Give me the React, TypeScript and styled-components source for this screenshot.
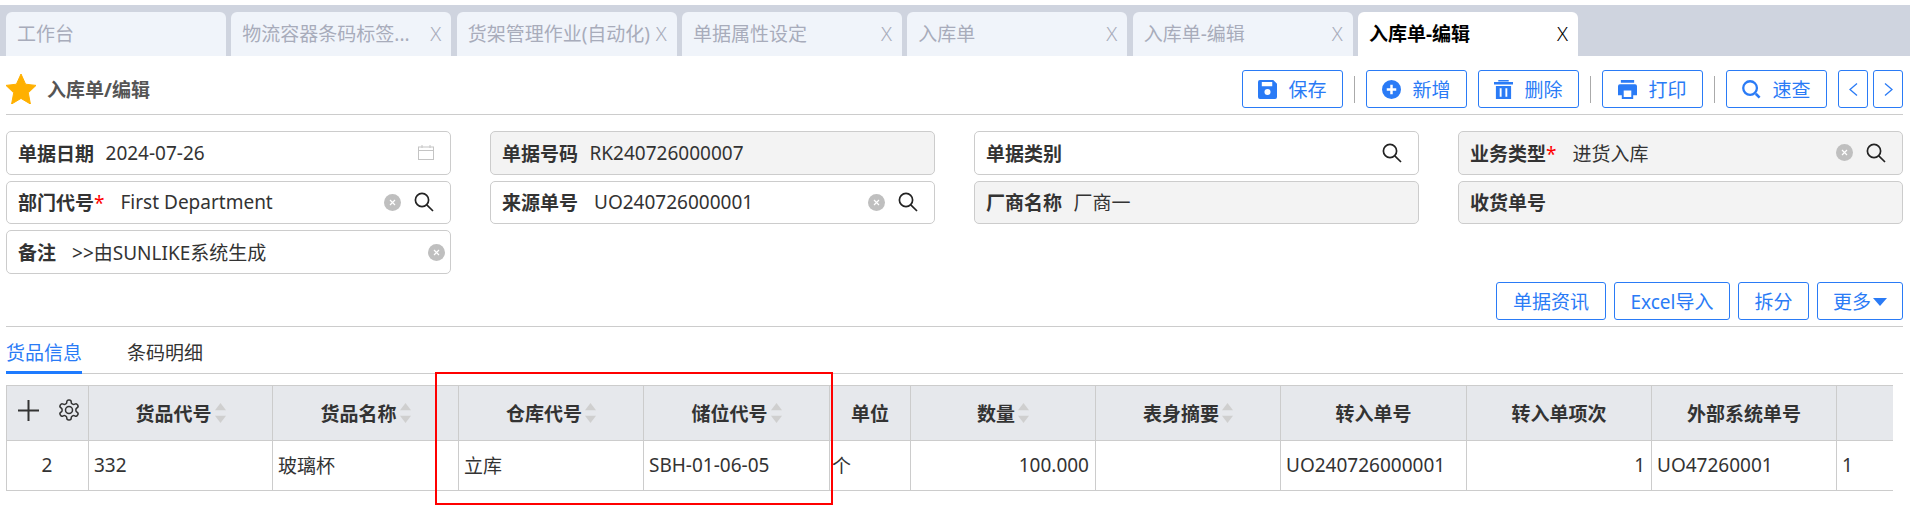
import React, { FunctionComponent, ReactNode } from 'react'
import styled, { createGlobalStyle } from 'styled-components'

const BLUE = '#2a7bf6'
const LINE = '#cccccc'

const tabs = [
  { label: '工作台', closable: false },
  { label: '物流容器条码标签...', closable: true },
  { label: '货架管理作业(自动化)', closable: true },
  { label: '单据属性设定', closable: true },
  { label: '入库单', closable: true },
  { label: '入库单-编辑', closable: true },
  { label: '入库单-编辑', closable: true, active: true },
]

const columns = [
  { title: '货品代号', width: 184, sort: true },
  { title: '货品名称', width: 186, sort: true },
  { title: '仓库代号', width: 185, sort: true },
  { title: '储位代号', width: 186, sort: true },
  { title: '单位', width: 81 },
  { title: '数量', width: 185, sort: true },
  { title: '表身摘要', width: 185, sort: true },
  { title: '转入单号', width: 186 },
  { title: '转入单项次', width: 185 },
  { title: '外部系统单号', width: 185 },
  { title: '', width: 56 },
]

const cells: { text: string; right?: boolean; narrow?: boolean }[] = [
  { text: '332' },
  { text: '玻璃杯' },
  { text: '立库' },
  { text: 'SBH-01-06-05' },
  { text: '个', narrow: true },
  { text: '100.000', right: true },
  { text: '' },
  { text: 'UO240726000001' },
  { text: '1', right: true },
  { text: 'UO47260001' },
  { text: '1' },
]

const ClearIcon = () => (
  <ClearSvg viewBox="0 0 17 17">
    <circle cx="8.5" cy="8.5" r="8.5" fill="#bfbfbf" />
    <path d="M6 6l5 5M11 6l-5 5" stroke="#fff" strokeWidth="1.2" />
  </ClearSvg>
)

const SearchIcon = () => (
  <SearchSvg viewBox="0 0 20 20" fill="none" stroke="#222" strokeWidth="1.7">
    <circle cx="8" cy="8" r="6.6" />
    <path d="M12.8 12.8L19 19" />
  </SearchSvg>
)

const CalendarIcon = () => (
  <CalendarSvg viewBox="0 0 16 15" fill="none" stroke="#c4c4c4" strokeWidth="1">
    <rect x="0.5" y="2" width="15" height="12.5" />
    <path d="M0.5 5.5h15M4 0v3M12 0v3" />
  </CalendarSvg>
)

const SortIcon = () => (
  <SortSvg viewBox="0 0 12 22">
    <path d="M6 0l6 8H0z" fill="#cfcfcf" />
    <path d="M6 22l6-8H0z" fill="#cfcfcf" />
  </SortSvg>
)

const ButtonIcon: FunctionComponent<{ children: ReactNode }> = ({ children }) => (
  <IconSvg viewBox="0 0 20 20">{children}</IconSvg>
)

const Field: FunctionComponent<{
  label: string
  value?: string
  required?: boolean
  disabled?: boolean
  lookup?: boolean
  clear?: boolean
  inset?: boolean
  date?: boolean
}> = ({ label, value, required, disabled, lookup, clear, inset, date }) => (
  <FieldBox $disabled={disabled} $tight={clear && !lookup}>
    <FieldLabel>
      {label}
      {required && <Required>*</Required>}
    </FieldLabel>
    <FieldValue $inset={inset}>{value}</FieldValue>
    {date && <CalendarIcon />}
    {clear && <ClearIcon />}
    {lookup && <SearchIcon />}
  </FieldBox>
)

export default function App() {
  return (
    <>
      <GlobalStyle />
      <Page>
        <TabBar>
          {tabs.map((tab, i) => (
            <Tab key={i} $active={tab.active}>
              <span>{tab.label}</span>
              {tab.closable && <TabClose>X</TabClose>}
            </Tab>
          ))}
        </TabBar>
        <Content>
          <Header>
            <Star viewBox="0 0 30 30">
              <path
                d="M15 0l4.6 10.2 10.4 1.2-7.7 7.4 2.1 11.2-9.4-5.6-9.4 5.6 2.1-11.2L0 11.4l10.4-1.2z"
                fill="#ffb000"
                stroke="#ffb000"
                strokeWidth="1"
                strokeLinejoin="round"
              />
            </Star>
            <Title>入库单/编辑</Title>
            <Toolbar>
              <ActionButton>
                <ButtonIcon>
                  <path
                    fillRule="evenodd"
                    d="M2 0h14l4 4v14a2 2 0 0 1-2 2H2a2 2 0 0 1-2-2V2a2 2 0 0 1 2-2zM4 2v4.500h11V2zm6 7.500a3.200 3.200 0 1 0 0 6.400 3.200 3.200 0 0 0 0-6.400z"
                    fill={BLUE}
                  />
                </ButtonIcon>
                保存
              </ActionButton>
              <Divider />
              <ActionButton>
                <ButtonIcon>
                  <path
                    fillRule="evenodd"
                    d="M10 0a10 10 0 1 1 0 20 10 10 0 0 1 0-20zM8.700 5v3.700H5v2.600h3.700V15h2.600v-3.700H15V8.700h-3.700V5z"
                    fill={BLUE}
                  />
                </ButtonIcon>
                新增
              </ActionButton>
              <ActionButton>
                <ButtonIcon>
                  <path
                    fillRule="evenodd"
                    d="M4.500 0h11v1.500h-11zM0 2.200h20v2.500H0zM2 6.200h16V20H2zM6 8.700v8.800h2V8.700zm6 0v8.800h2V8.700z"
                    fill={BLUE}
                  />
                </ButtonIcon>
                删除
              </ActionButton>
              <Divider />
              <ActionButton>
                <ButtonIcon>
                  <path
                    fillRule="evenodd"
                    d="M3 0h14v3H3zM2 4.500h16a2 2 0 0 1 2 2V16h-4v4H4v-4H0V6.500a2 2 0 0 1 2-2zM6 11v7h8v-7z"
                    fill={BLUE}
                  />
                </ButtonIcon>
                打印
              </ActionButton>
              <Divider />
              <ActionButton>
                <ButtonIcon>
                  <circle cx="8.500" cy="8.500" r="7.200" fill="none" stroke={BLUE} strokeWidth="2.400" />
                  <path d="M14.500 14.500l4 4" stroke={BLUE} strokeWidth="2.800" />
                </ButtonIcon>
                速查
              </ActionButton>
              <ArrowButton>
                <svg width="9" height="13" viewBox="0 0 9 13" fill="none" stroke={BLUE} strokeWidth="1.300">
                  <path d="M8 .5l-7 6 7 6" />
                </svg>
              </ArrowButton>
              <ArrowButton>
                <svg width="9" height="13" viewBox="0 0 9 13" fill="none" stroke={BLUE} strokeWidth="1.300">
                  <path d="M1 .5l7 6-7 6" />
                </svg>
              </ArrowButton>
            </Toolbar>
          </Header>

          <FormGrid>
            <Field label="单据日期" value="2024-07-26" date />
            <Field label="单据号码" value="RK240726000007" disabled />
            <Field label="单据类别" lookup />
            <Field label="业务类型" required value="进货入库" disabled clear lookup inset />
            <Field label="部门代号" required value="First Department" clear lookup inset />
            <Field label="来源单号" value="UO240726000001" clear lookup inset />
            <Field label="厂商名称" value="厂商一" disabled />
            <Field label="收货单号" disabled />
            <Field label="备注" value=">>由SUNLIKE系统生成" clear inset />
          </FormGrid>

          <SecondaryBar>
            <PlainButton $width={110}>单据资讯</PlainButton>
            <PlainButton $width={116}>Excel导入</PlainButton>
            <PlainButton $width={71}>拆分</PlainButton>
            <PlainButton $width={86}>
              更多
              <Caret />
            </PlainButton>
          </SecondaryBar>

          <SubTabs>
            <SubTab $active>货品信息</SubTab>
            <SubTab>条码明细</SubTab>
          </SubTabs>

          <TableWrap>
            <Grid>
              <colgroup>
                <ColWidth $width={82} />
                {columns.map((c, i) => (
                  <ColWidth key={i} $width={c.width} />
                ))}
              </colgroup>
              <thead>
                <tr>
                  <HeadCell>
                    <HeadTools>
                      <svg width="21" height="21" viewBox="0 0 21 21" stroke="#333" strokeWidth="2">
                        <path d="M10.500 0v21M0 10.500h21" />
                      </svg>
                      <svg width="24" height="24" viewBox="0 0 24 24" fill="none" stroke="#333" strokeWidth="1.500" strokeLinejoin="round">
                        <path d="M12.220 2h-.44a2 2 0 0 0-2 2v.18a2 2 0 0 1-1 1.730l-.43.250a2 2 0 0 1-2 0l-.150-.080a2 2 0 0 0-2.730.730l-.220.380a2 2 0 0 0 .730 2.730l.150.100a2 2 0 0 1 1 1.720v.510a2 2 0 0 1-1 1.740l-.150.090a2 2 0 0 0-.730 2.730l.220.380a2 2 0 0 0 2.730.730l.150-.080a2 2 0 0 1 2 0l.430.250a2 2 0 0 1 1 1.730V20a2 2 0 0 0 2 2h.440a2 2 0 0 0 2-2v-.18a2 2 0 0 1 1-1.730l.430-.250a2 2 0 0 1 2 0l.150.080a2 2 0 0 0 2.730-.730l.220-.390a2 2 0 0 0-.730-2.730l-.150-.080a2 2 0 0 1-1-1.740v-.500a2 2 0 0 1 1-1.740l.150-.090a2 2 0 0 0 .730-2.730l-.220-.380a2 2 0 0 0-2.730-.730l-.150.080a2 2 0 0 1-2 0l-.430-.250a2 2 0 0 1-1-1.730V4a2 2 0 0 0-2-2z" />
                        <circle cx="12" cy="12" r="3.500" />
                      </svg>
                    </HeadTools>
                  </HeadCell>
                  {columns.map((c, i) => (
                    <HeadCell key={i}>
                      <HeadInner>
                        {c.title}
                        {c.sort && <SortIcon />}
                      </HeadInner>
                    </HeadCell>
                  ))}
                </tr>
              </thead>
              <tbody>
                <tr>
                  <BodyCell $center>2</BodyCell>
                  {cells.map((c, i) => (
                    <BodyCell key={i} $right={c.right} $narrow={c.narrow}>
                      {c.text}
                    </BodyCell>
                  ))}
                </tr>
              </tbody>
            </Grid>
            <Highlight />
          </TableWrap>
        </Content>
      </Page>
    </>
  )
}

const GlobalStyle = createGlobalStyle`
  html, body {
    margin: 0;
    padding: 0;
    background: #fff;
  }

  body {
    font-family: 'Noto Sans', 'Noto Sans CJK SC', sans-serif;
    font-size: 19px;
    color: #333;
    overflow: hidden;
  }
`

const Page = styled.div`
  width: 1910px;
  height: 524px;
  padding-top: 5px;
  box-sizing: border-box;
`

const TabBar = styled.div`
  display: flex;
  gap: 5.33px;
  height: 51px;
  padding: 7px 0 0 6px;
  box-sizing: border-box;
  background: #cfd4df;
`

const Tab = styled.div<{ $active?: boolean }>`
  display: flex;
  align-items: center;
  justify-content: space-between;
  width: 220px;
  padding: 0 10px 2px 11px;
  box-sizing: border-box;
  border-radius: 6px 6px 0 0;
  background: ${({ $active }) => ($active ? '#fff' : '#f0f4fa')};
  color: ${({ $active }) => ($active ? '#000' : '#a8acbb')};
  font-weight: ${({ $active }) => ($active ? 700 : 400)};
  white-space: nowrap;
`

const TabClose = styled.span`
  font-size: 20px;
  font-weight: 300;
`

const Content = styled.div`
  padding: 0 7px 0 6px;
`

const Header = styled.div`
  display: flex;
  align-items: center;
  padding: 14px 0 6px;
  border-bottom: 1px solid ${LINE};
`

const Star = styled.svg`
  width: 30px;
  height: 30px;
  flex: none;
`

const Title = styled.h1`
  margin: 0 0 0 11px;
  font-size: 19px;
  font-weight: 700;
  color: #555;
`

const Toolbar = styled.div`
  display: flex;
  align-items: center;
  gap: 11px;
  margin-left: auto;
`

const ActionButton = styled.button`
  display: flex;
  align-items: center;
  justify-content: center;
  gap: 11px;
  width: 101px;
  height: 38px;
  padding: 0;
  border: 1px solid ${BLUE};
  border-radius: 3px;
  background: #fff;
  color: ${BLUE};
  font: inherit;
`

const ArrowButton = styled(ActionButton)`
  width: 30px;
  margin-right: -6px;

  &:last-child {
    margin-right: 0;
  }
`

const IconSvg = styled.svg`
  width: 19px;
  height: 19px;
  flex: none;
`

const Divider = styled.span`
  width: 1px;
  height: 27px;
  background: #aaa;
`

const FormGrid = styled.div`
  display: grid;
  grid-template-columns: repeat(4, 1fr);
  grid-auto-rows: 43.5px;
  column-gap: 39px;
  row-gap: 6.2px;
  margin-top: 16px;
`

const FieldBox = styled.div<{ $disabled?: boolean; $tight?: boolean }>`
  display: flex;
  align-items: center;
  padding: 0 ${({ $tight }) => ($tight ? '5px' : '16px')} 0 11px;
  border: 1px solid ${LINE};
  border-radius: 5px;
  background: ${({ $disabled }) => ($disabled ? '#f3f3f3' : '#fff')};
`

const FieldLabel = styled.span`
  flex: none;
  font-weight: 700;
  color: #333;
`

const Required = styled.span`
  color: #f00;
  font-weight: 400;
`

const FieldValue = styled.span<{ $inset?: boolean }>`
  flex: 1;
  margin-left: ${({ $inset }) => ($inset ? '16px' : '11.5px')};
  color: #333;
  white-space: nowrap;
`

const ClearSvg = styled.svg`
  flex: none;
  width: 17px;
  height: 17px;
`

const SearchSvg = styled.svg`
  flex: none;
  width: 20px;
  height: 20px;
  margin-left: 13px;
`

const CalendarSvg = styled.svg`
  flex: none;
  width: 16px;
  height: 15px;
`

const SecondaryBar = styled.div`
  display: flex;
  justify-content: flex-end;
  gap: 8px;
  margin-top: 8.1px;
  padding-bottom: 6px;
  border-bottom: 1px solid ${LINE};
`

const PlainButton = styled.button<{ $width: number }>`
  display: flex;
  align-items: center;
  justify-content: center;
  gap: 2px;
  width: ${({ $width }) => $width}px;
  height: 38px;
  padding: 0;
  border: 1px solid ${BLUE};
  border-radius: 3px;
  background: #fff;
  color: ${BLUE};
  font: inherit;
`

const Caret = styled.span`
  width: 0;
  height: 0;
  margin-top: 3px;
  border-left: 7px solid transparent;
  border-right: 7px solid transparent;
  border-top: 8px solid ${BLUE};
`

const SubTabs = styled.div`
  display: flex;
  gap: 45px;
  height: 46px;
  border-bottom: 1px solid ${LINE};
`

const SubTab = styled.div<{ $active?: boolean }>`
  height: 47px;
  line-height: 52px;
  box-sizing: border-box;
  color: ${({ $active }) => ($active ? BLUE : '#333')};
  border-bottom: 3px solid ${({ $active }) => ($active ? '#1e7bff' : 'transparent')};
`

const TableWrap = styled.div`
  position: relative;
  margin-top: 11px;
`

const Grid = styled.table`
  width: 1886px;
  table-layout: fixed;
  border-collapse: collapse;
`

const ColWidth = styled.col<{ $width: number }>`
  width: ${({ $width }) => $width}px;
`

const HeadCell = styled.th`
  height: 54px;
  padding: 0;
  border: 1px solid ${LINE};
  background: #e6e8ec;
  font-weight: 700;
  color: #333;
  white-space: nowrap;

  &:last-child {
    border-right: none;
  }
`

const HeadInner = styled.div`
  display: flex;
  align-items: center;
  justify-content: center;
`

const HeadTools = styled.div`
  display: flex;
  align-items: center;
  justify-content: space-between;
  padding: 0 7px 5px 11px;
`

const SortSvg = styled.svg`
  width: 11px;
  height: 22px;
  margin-left: 3px;
  flex: none;
`

const BodyCell = styled.td<{ $center?: boolean; $right?: boolean; $narrow?: boolean }>`
  height: 49px;
  padding: 0 6px 0 ${({ $narrow }) => ($narrow ? '2px' : '5px')};
  border: 1px solid ${LINE};
  text-align: ${({ $center, $right }) => ($center ? 'center' : $right ? 'right' : 'left')};
  color: #333;
  white-space: nowrap;

  &:last-child {
    border-right: none;
  }
`

const Highlight = styled.div`
  position: absolute;
  top: -13px;
  left: 429px;
  width: 398px;
  height: 133px;
  box-sizing: border-box;
  border: 2px solid #f00;
  pointer-events: none;
`
